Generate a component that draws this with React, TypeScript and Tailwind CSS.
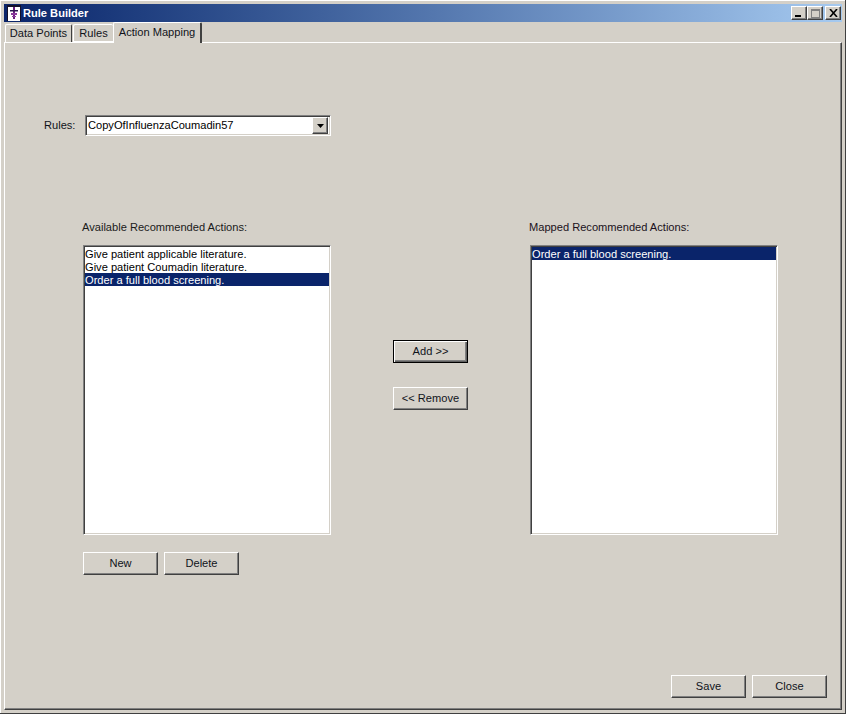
const font = { fontFamily: '"Liberation Sans", Arial, sans-serif' };

function CaptionButton({ children, disabled }: { children: React.ReactNode; disabled?: boolean }) {
  return (
    <div
      className={`w-4 h-[14px] bg-[#d4d0c8] border-t border-l border-t-white border-l-white border-r border-b border-r-[#404040] border-b-[#404040] shadow-[inset_-1px_-1px_0_#808080] flex items-center justify-center ${disabled ? 'text-[#808080]' : 'text-black'}`}
    >
      {children}
    </div>
  );
}

function Button({ label, active }: { label: string; active?: boolean }) {
  return (
    <button
      type="button"
      className={`w-[75px] h-[23px] bg-[#d4d0c8] text-[11.1px] text-[#10131a] flex items-center justify-center ${
        active
          ? 'border border-black shadow-[inset_1px_1px_0_white,inset_-1px_-1px_0_#606060,inset_-2px_-2px_0_#808080]'
          : 'border-t border-l border-t-white border-l-white border-r border-b border-r-[#404040] border-b-[#404040] shadow-[inset_-1px_-1px_0_#808080]'
      }`}
    >
      {label}
    </button>
  );
}

function ListBox({ items, selected }: { items: string[]; selected: number }) {
  return (
    <div className="w-[248px] h-[290px] bg-white border-t border-l border-t-[#808080] border-l-[#808080] border-r border-b border-r-white border-b-white shadow-[inset_1px_1px_0_#404040,inset_-1px_-1px_0_#d4d0c8] pt-[1px] pl-[1px] pr-[1px] text-[11.1px] leading-[14px]">
      {items.map((item, i) => (
        <div key={item} className={`h-[13px] whitespace-nowrap ${i === selected ? 'bg-[#0a246a] text-white' : 'text-black'}`}>
          {item}
        </div>
      ))}
    </div>
  );
}

function AppIcon() {
  return (
    <svg width="16" height="16" viewBox="0 0 16 16" className="shrink-0">
      <rect x="1" y="0" width="14" height="16" fill="#fff" />
      <path d="M1 0h14v2H1zM1 0h1v16H1zM14 0h1v16h-1z" fill="#14102a" />
      <path d="M7 2h2v12H7z" fill="#6a1f80" />
      <path d="M4 5h8v1.5H4z" fill="#2a1850" />
      <path d="M5 8h6v2H5zM6 11h4v1H6z" fill="#8a3a9c" />
    </svg>
  );
}

export default function App() {
  return (
    <div
      style={font}
      className="w-[846px] h-[714px] bg-[#d4d0c8] border-r border-b border-r-[#404040] border-b-[#404040] shadow-[inset_1px_1px_0_white] pt-[4px] pl-[4px] pr-[3px] pb-[3px] flex flex-col overflow-hidden text-black"
    >
      <div className="h-[18px] shrink-0 flex items-center pl-[2px] pr-[1px] bg-gradient-to-r from-[#0a246a] to-[#a6caf0]">
        <AppIcon />
        <span className="ml-[1px] text-white text-[11.1px] font-bold">Rule Builder</span>
        <div className="ml-auto flex items-center">
          <CaptionButton>
            <span className="block w-[6px] h-[2px] bg-black mt-[6px] mr-[2px]" />
          </CaptionButton>
          <CaptionButton disabled>
            <span className="block w-[9px] h-[9px] border border-t-2 border-[#808080]" />
          </CaptionButton>
          <div className="ml-[2px]">
            <CaptionButton>
              <svg width="9" height="8" viewBox="0 0 9 8">
                <path d="M1 0l7 8M8 0L1 8" stroke="#000" strokeWidth="1.6" />
              </svg>
            </CaptionButton>
          </div>
        </div>
      </div>

      <div className="h-[20px] shrink-0 flex items-end pl-[1px] text-[11.1px] relative z-10">
        <div className="h-[18px] w-[67px] flex items-center justify-center border-t border-l border-t-white border-l-white border-r border-r-[#404040] rounded-t-[2px] text-[#10131a]">
          Data Points
        </div>
        <div className="h-[18px] w-[40px] ml-[1px] flex items-center justify-center border-t border-l border-t-white border-l-white border-b border-b-white rounded-t-[2px] text-[#10131a]">
          Rules
        </div>
        <div className="h-[21px] w-[89px] -mb-px pb-[2px] flex items-center justify-center bg-[#d4d0c8] border-t border-l border-t-white border-l-white border-r-2 border-r-[#404040] rounded-t-[2px] text-[#10131a]">
          Action Mapping
        </div>
      </div>

      <div className="flex-1 min-h-0 border-t border-t-white border-l border-l-white border-r border-r-[#404040] border-b border-b-[#404040] shadow-[inset_-1px_-1px_0_#808080] flex flex-col pb-[11px]">
        <div className="mt-[72px] flex items-center pl-[39px] text-[11.1px]">
          <span className="w-[41px] text-[#10131a]">Rules:</span>
          <div className="w-[246px] h-[21px] bg-white border-t border-l border-t-[#808080] border-l-[#808080] border-r border-b border-r-white border-b-white shadow-[inset_1px_1px_0_#404040,inset_-1px_-1px_0_#d4d0c8] flex items-center pl-[2px] pr-[2px]">
            <span className="flex-1">CopyOfInfluenzaCoumadin57</span>
            <div className="w-4 h-[17px] bg-[#d4d0c8] border-t border-l border-t-white border-l-white border-r border-b border-r-[#404040] border-b-[#404040] shadow-[inset_-1px_-1px_0_#808080] flex items-center justify-center">
              <svg width="7" height="4" viewBox="0 0 7 4">
                <path d="M0 0h7L3.5 4z" fill="#000" />
              </svg>
            </div>
          </div>
        </div>

        <div className="mt-[83px] flex pl-[78px] text-[11.1px]">
          <div className="flex flex-col w-[248px]">
            <div className="h-[14px] mb-[12px] -ml-[1px] text-[#1a1a1a]">Available Recommended Actions:</div>
            <ListBox
              items={['Give patient applicable literature.', 'Give patient Coumadin literature.', 'Order a full blood screening.']}
              selected={2}
            />
            <div className="mt-[17px] flex gap-[6px]">
              <Button label="New" />
              <Button label="Delete" />
            </div>
          </div>

          <div className="ml-[62px] pt-[121px] flex flex-col gap-[24px]">
            <Button label="Add >>" active />
            <Button label="<< Remove" />
          </div>

          <div className="ml-[62px] flex flex-col w-[248px]">
            <div className="h-[14px] mb-[12px] -ml-[1px] text-[#1a1020]">Mapped Recommended Actions:</div>
            <ListBox items={['Order a full blood screening.']} selected={0} />
          </div>
        </div>

        <div className="mt-auto flex justify-end gap-[6px] pr-[14px]">
          <Button label="Save" />
          <Button label="Close" />
        </div>
      </div>
    </div>
  );
}
